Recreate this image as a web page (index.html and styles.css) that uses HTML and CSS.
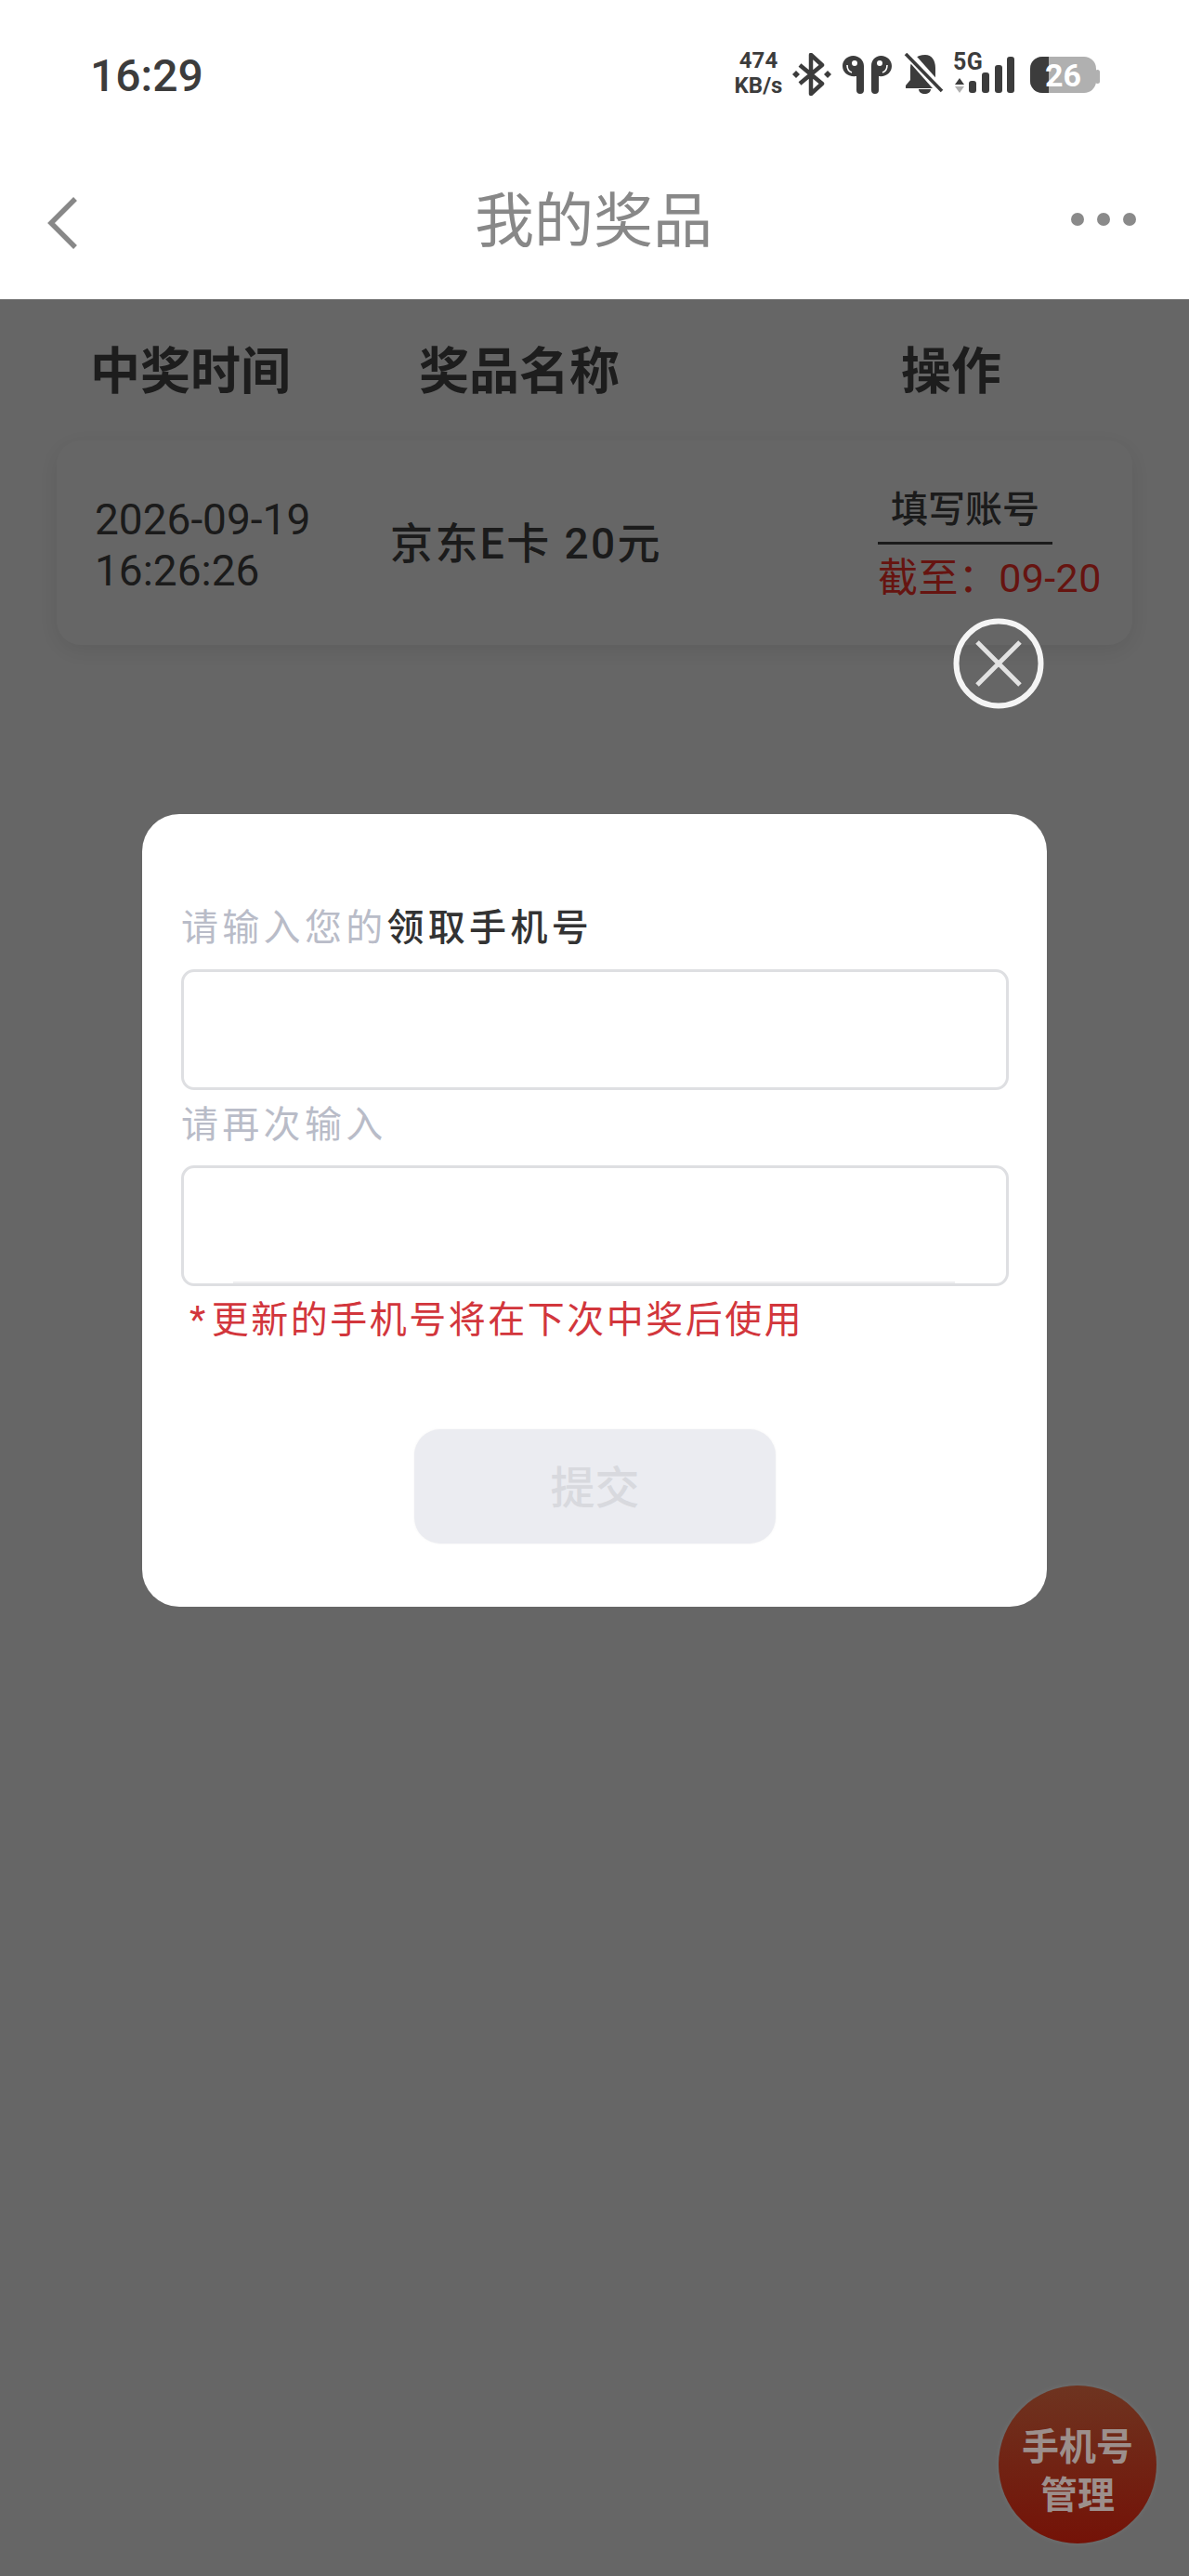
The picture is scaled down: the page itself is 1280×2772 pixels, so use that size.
FILE: index.html
```html
<!DOCTYPE html>
<html lang="zh-CN">
<head>
<meta charset="utf-8">
<title>我的奖品</title>
<link rel="stylesheet" href="styles.css">
</head>
<body>
<div class="page">
  <header class="status">
    <span class="clock">16:29</span>
    <div class="status-icons">
      <div class="speed"><span>474</span><span>KB/s</span></div>
      <svg class="ico" width="45" height="46" viewBox="0 0 45 46"><path d="M9 13 33 33 21 44V2L33 13 9 33" fill="none" stroke="#3c3c3c" stroke-width="4.5" stroke-linejoin="round"/><path d="M5 19l4 4-4 4-4-4zM39 19l4 4-4 4-4-4z" fill="#3c3c3c"/></svg>
      <svg class="ico" width="55" height="46" viewBox="0 0 55 46"><path d="M11.5 3C18 3 23 8 23 14V40a4 4 0 0 1-8 0V25C6 26 0 21 0 14 0 8 5 3 11.5 3Z" fill="#3c3c3c"/><path d="M41.5 3C35 3 31 8 31 14V40a4 4 0 0 0 8 0V25C47 26 53 21 53 14 53 8 48 3 41.5 3Z" fill="#3c3c3c"/><circle cx="13" cy="11" r="3" fill="#fff"/><circle cx="40" cy="11" r="3" fill="#fff"/><path d="M5 13c0 4 2 7 5 8M48 13c0 4-2 7-5 8" fill="none" stroke="#fff" stroke-width="1.6"/></svg>
      <svg class="ico" width="44" height="46" viewBox="0 0 44 46"><path d="M24 2c7 0 11 6 11 14v13l4 7v2H3v-3l5-6V16C8 8 15 2 24 2Z" fill="#3c3c3c"/><path d="M17 39h13c0 3-3 5-6.500 5S17 42 17 39Z" fill="#3c3c3c"/><path d="M4 -1 44 44" stroke="#fff" stroke-width="10"/><path d="M3 1 42 41" stroke="#3c3c3c" stroke-width="3.600"/></svg>
      <div class="signal">
        <span class="five-g">5G</span>
        <svg class="ico" width="73" height="46" viewBox="0 0 73 46"><path d="M7 27l5 7H2z" fill="#3c3c3c"/><path d="M7 43l5-7H2z" fill="#b0b0b0"/><rect x="17" y="30" width="8" height="13" rx="3" fill="#3c3c3c"/><rect x="31" y="21" width="8" height="22" rx="3" fill="#3c3c3c"/><rect x="45" y="13" width="8" height="30" rx="3" fill="#3c3c3c"/><rect x="58" y="4" width="8" height="39" rx="3" fill="#3c3c3c"/></svg>
      </div>
      <svg class="ico" width="75" height="46" viewBox="0 0 75 46"><rect x="0" y="4" width="71" height="39" rx="13" fill="#b0b0b0"/><rect x="70" y="18" width="5" height="15" rx="2.500" fill="#b0b0b0"/><path d="M20 4H13A13 13 0 0 0 0 17V30A13 13 0 0 0 13 43H20Z" fill="#3c3c3c"/><text class="batt-num" x="35.500" y="36" font-size="34" text-anchor="middle">26</text></svg>
    </div>
  </header>

  <nav class="nav">
    <svg class="back" width="40" height="60" viewBox="0 0 40 60"><path d="M33 4 7 30 33 56" fill="none" stroke="#888" stroke-width="5.500"/></svg>
    <h1 class="title">我的奖品</h1>
    <div class="more"><i></i><i></i><i></i></div>
  </nav>

  <main class="main">
    <div class="thead">
      <span>中奖时间</span>
      <span>奖品名称</span>
      <span>操作</span>
    </div>
    <section class="card">
      <div class="date">2026-09-19<br>16:26:26</div>
      <div class="prize">京东E卡 20元</div>
      <div class="op">
        <div class="op-action">填写账号</div>
        <div class="op-deadline">截至：09-20</div>
      </div>
    </section>
  </main>

  <div class="overlay">
    <div class="modal">
      <svg class="close" width="100" height="100" viewBox="0 0 100 100"><circle cx="50" cy="50" r="45.500" fill="none" stroke="#f4f4f4" stroke-width="6"/><path d="M27 27 73 73M73 27 27 73" stroke="#e2e2e2" stroke-width="5"/></svg>
      <div class="label">请输入您的<b>领取手机号</b></div>
      <input class="input" type="text" aria-label="领取手机号">
      <div class="label label-again">请再次输入</div>
      <div class="field">
        <input class="input" type="text" aria-label="再次输入">
      </div>
      <p class="note"><span class="star">*</span>更新的手机号将在下次中奖后使用</p>
      <div class="submit">提交</div>
    </div>
  </div>

  <div class="fab">手机号<br>管理</div>
</div>
</body>
</html>
```

FILE: styles.css
```css
* { box-sizing: border-box; }

html, body {
  margin: 0;
  padding: 0;
  background: #fff;
}

body {
  font-family: "Roboto", "Noto Sans CJK SC", sans-serif;
}

.page {
  position: relative;
  width: 1280px;
  height: 2772px;
  overflow: hidden;
  background: #fff;
}

/* status bar */
.status {
  height: 152px;
  padding: 51px 96px 0 97px;
  display: flex;
  justify-content: space-between;
  align-items: flex-start;
  color: #3c3c3c;
}

.clock {
  font-size: 48px;
  line-height: 62px;
  font-weight: 500;
}

.status-icons {
  margin-top: 6px;
  display: flex;
  align-items: flex-start;
  gap: 10px;
}

.ico { display: block; flex: none; }

.batt-num {
  font-family: "Roboto", sans-serif;
  font-weight: 700;
  fill: #fff;
}

.speed {
  width: 51px;
  margin-top: -5px;
  display: flex;
  flex-direction: column;
  align-items: center;
  font-size: 24px;
  line-height: 26.500px;
  font-weight: 700;
  white-space: nowrap;
}

.signal {
  display: grid;
  width: 73px;
}

.signal > * { grid-area: 1 / 1; }

.five-g {
  font-size: 25px;
  line-height: 20px;
  font-weight: 700;
  letter-spacing: 0.500px;
  white-space: nowrap;
}

/* nav */
.nav {
  height: 170px;
  padding: 0 57px 0 55px;
  display: grid;
  grid-template-columns: 1fr auto 1fr;
  align-items: center;
}

.back {
  display: block;
  margin: 5px 0 0 -7px;
}

.title {
  margin: 0;
  padding-top: 3px;
  font-size: 64px;
  line-height: 80px;
  font-weight: 400;
  color: #888;
}

.more {
  justify-self: end;
  margin-top: -3px;
  display: flex;
  gap: 14px;
}

.more i {
  display: block;
  width: 14px;
  height: 14px;
  border-radius: 50%;
  background: #8a8a8a;
}

/* content under the dim layer */
.thead {
  height: 152px;
  padding: 0 0 6px 97px;
  display: grid;
  grid-template-columns: 354px 519px auto;
  align-items: center;
  font-size: 54px;
  font-weight: 700;
  color: #4a4a4a;
}

.card {
  width: 1158px;
  height: 220px;
  margin-left: 61px;
  padding-left: 41px;
  display: grid;
  grid-template-columns: 318px 525px auto;
  align-items: center;
  background: #fff;
  border-radius: 26px;
  box-shadow: 0 6px 24px rgba(0, 0, 0, 0.09);
  color: #444;
}

.date {
  padding-top: 5px;
  font-size: 46px;
  line-height: 55px;
}

.prize {
  padding-bottom: 6px;
  font-size: 46px;
  font-weight: 500;
  letter-spacing: 2.400px;
  white-space: nowrap;
}

.op {
  align-self: start;
  padding-top: 50px;
}

.op-action {
  width: 188px;
  padding-bottom: 9px;
  border-bottom: 3px solid #444;
  font-size: 40px;
  line-height: 50px;
  font-weight: 500;
  text-align: center;
}

.op-deadline {
  font-size: 43px;
  line-height: 72px;
  letter-spacing: 0.400px;
  color: #ff3228;
  white-space: nowrap;
}

/* dim layer + dialog */
.overlay {
  position: absolute;
  top: 322px;
  left: 0;
  right: 0;
  bottom: 0;
  padding-top: 554px;
  background: rgba(0, 0, 0, 0.6);
}

.modal {
  position: relative;
  width: 974px;
  margin-left: 153px;
  padding: 93px 41px 68px 42px;
  background: #fff;
  border-radius: 40px;
}

.close {
  position: absolute;
  top: -212px;
  right: 2px;
}

.label {
  font-size: 40px;
  line-height: 60px;
  letter-spacing: 4.300px;
  color: #b9bcc8;
}

.label b {
  font-weight: 500;
  color: #333;
}

.label-again { margin-top: 8px; }

.input {
  display: block;
  width: 100%;
  height: 130px;
  margin: 14px 0 0;
  padding: 0;
  background: #fff;
  border: 3px solid #dedfe2;
  border-radius: 14px;
  outline: none;
}

.field {
  position: relative;
  margin-top: 13px;
}

.field .input { margin-top: 0; }

.field::after {
  content: "";
  position: absolute;
  left: 56px;
  right: 58px;
  bottom: 3px;
  height: 2px;
  background: #eeeef0;
}

.note {
  margin: 7px 0 0;
  padding-left: 9px;
  font-size: 40px;
  line-height: 60px;
  letter-spacing: 2.500px;
  color: #d2363c;
  white-space: nowrap;
}

.star { margin-right: 4px; }

.submit {
  width: 389px;
  height: 123px;
  margin: 87px auto 0;
  padding-bottom: 5px;
  display: flex;
  align-items: center;
  justify-content: center;
  background: #ebecf1;
  border-radius: 28px;
  box-shadow: 0 0 3px rgba(0, 0, 0, 0.05);
  font-size: 48px;
  font-weight: 500;
  color: #d8d9de;
}

/* floating button */
.fab {
  position: absolute;
  left: 1075px;
  top: 2567px;
  width: 170px;
  height: 170px;
  padding-top: 41px;
  border-radius: 50%;
  background: linear-gradient(#6e3420, #741207);
  box-shadow: 0 0 6px rgba(255, 255, 255, 0.08);
  color: #9c8f8c;
  font-size: 40px;
  line-height: 52px;
  font-weight: 700;
  text-align: center;
}
```
